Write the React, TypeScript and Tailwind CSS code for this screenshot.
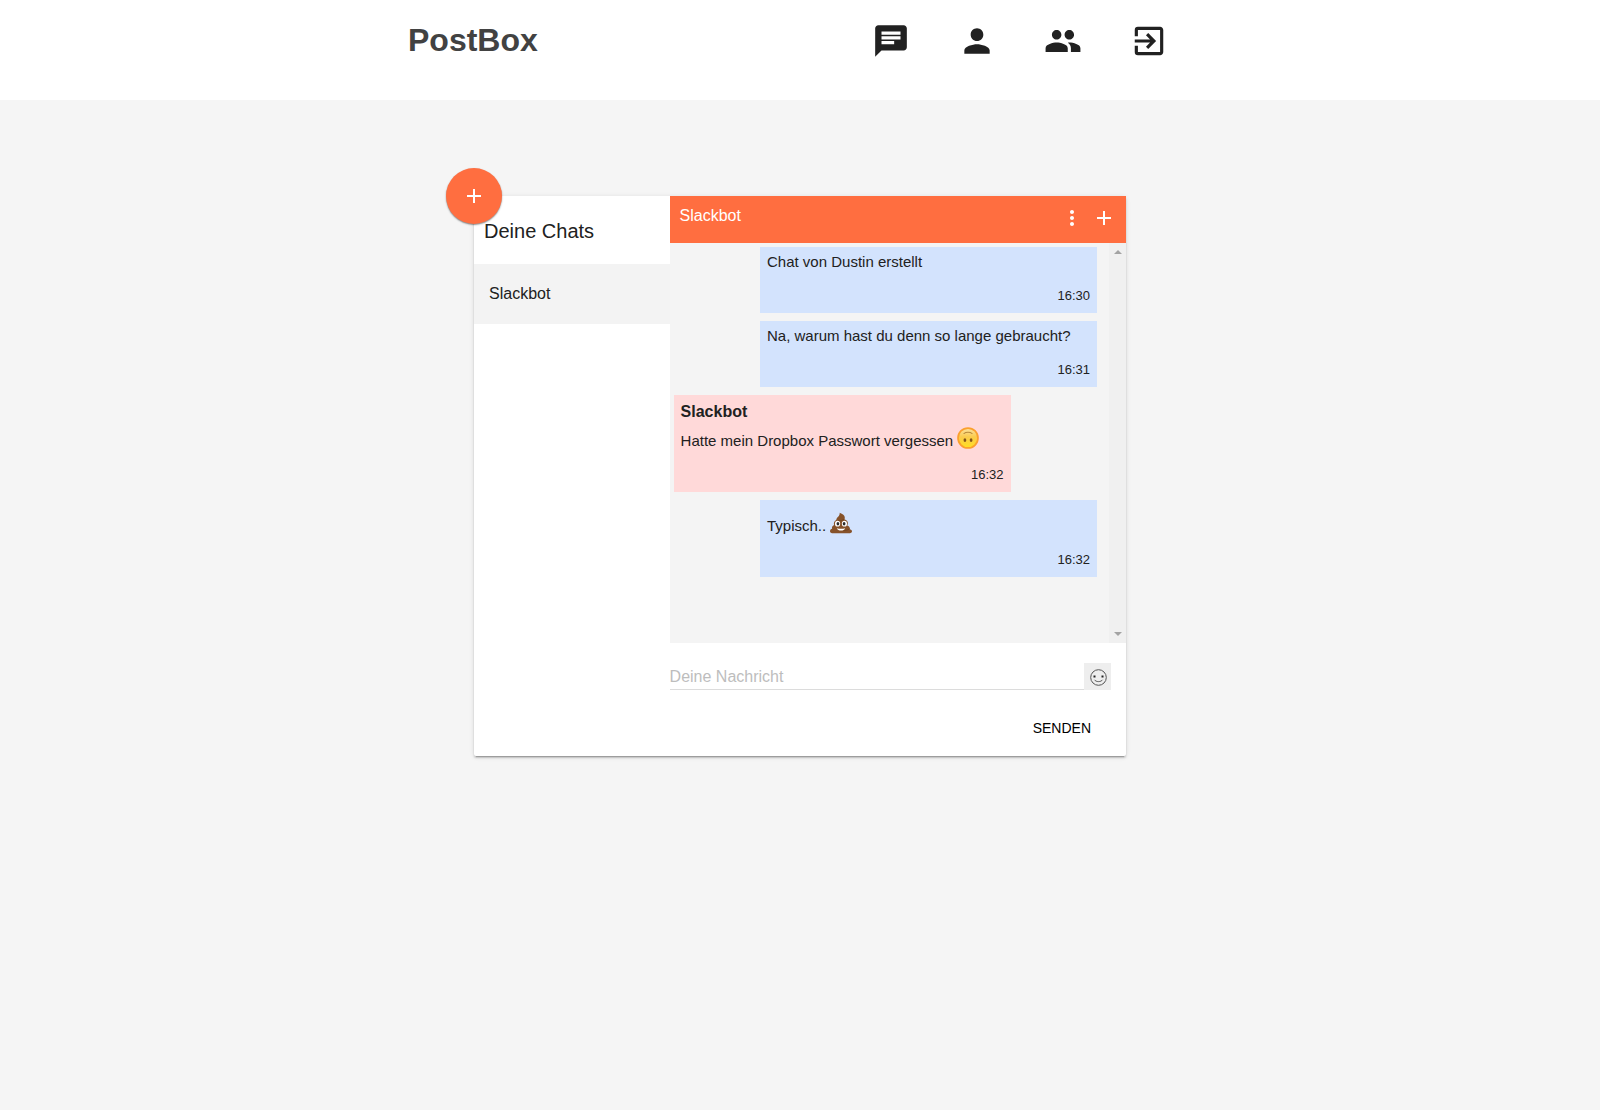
import type { ReactNode } from "react";
import { MdAdd, MdChat, MdExitToApp, MdMoreVert, MdPeople, MdPerson } from "react-icons/md";

const UpsideDownFace = () => (
  <svg viewBox="0 0 64 64" role="img" aria-label="Umgedrehtes Gesicht" className="mb-0.5 size-[22px] shrink-0">
    <defs>
      <linearGradient id="face" x1="0" y1="0" x2="0" y2="1">
        <stop offset="0" stopColor="#fbe3a4" />
        <stop offset="0.45" stopColor="#fbcb4c" />
        <stop offset="1" stopColor="#ffe01f" />
      </linearGradient>
    </defs>
    <circle cx="32" cy="32" r="29" fill="url(#face)" stroke="#fba02e" strokeWidth="5" />
    <path d="M20 19c6-5 18-5 24 0" fill="none" stroke="#b98a3c" strokeWidth="3" strokeLinecap="round" />
    <ellipse cx="23" cy="38" rx="4" ry="5.500" fill="#85551a" />
    <ellipse cx="41" cy="38" rx="4" ry="5.500" fill="#85551a" />
  </svg>
);

const Poop = () => (
  <svg viewBox="0 0 64 64" role="img" aria-label="Haufen" className="mb-0.5 size-[22px] shrink-0">
    <path
      d="M28 2c9 3 15 8 15 14 0 2 0 4-1 5 6 2 10 6 10 11 0 3-1 5-2 7 5 2 8 5 8 9l-1 2c4 1 7 3 7 6 0 4-4 6-10 6H10C4 62 0 60 0 56c0-4 3-6 6-7-1-5 1-9 6-11-2-6 0-12 6-15 1-6 4-8 7-11 2-3 4-6 3-10z"
      fill="#86522a"
    />
    <path d="M41 21c-5 4-11 5-18 4M57 49c-5 4-11 5-18 5" fill="none" stroke="#6d401d" strokeWidth="2" />
    <ellipse cx="22" cy="34" rx="7.500" ry="8.500" fill="#fff" />
    <ellipse cx="42" cy="34" rx="7.500" ry="8.500" fill="#fff" />
    <ellipse cx="23" cy="34" rx="4" ry="5" fill="#2b2b2b" />
    <ellipse cx="41" cy="34" rx="4" ry="5" fill="#2b2b2b" />
    <path d="M20 47c7 2 17 2 24 0-2 9-22 9-24 0z" fill="#fff" />
  </svg>
);

const Smiley = () => (
  <svg viewBox="0 0 17 17" className="size-[17px]" fill="none" stroke="#555">
    <circle cx="8.500" cy="8.500" r="7.800" />
    <path d="M4.500 10.800c1.500 2.400 6.500 2.400 8 0" />
    <path d="M3.500 6.500h2v2h-2zM11.500 6.500h2v2h-2z" fill="#222" stroke="none" />
  </svg>
);

const navItems = [
  { label: "Chats", Icon: MdChat },
  { label: "Profil", Icon: MdPerson },
  { label: "Kontakte", Icon: MdPeople },
  { label: "Abmelden", Icon: MdExitToApp },
];

type Message = { id: number; text: string; time: string; from?: string; emoji?: ReactNode };

const messages: Message[] = [
  { id: 1, text: "Chat von Dustin erstellt", time: "16:30" },
  { id: 2, text: "Na, warum hast du denn so lange gebraucht?", time: "16:31" },
  { id: 3, from: "Slackbot", text: "Hatte mein Dropbox Passwort vergessen", emoji: <UpsideDownFace />, time: "16:32" },
  { id: 4, text: "Typisch..", emoji: <Poop />, time: "16:32" },
];

const Bubble = ({ message }: { message: Message }) => (
  <li
    className={`w-[337px] max-w-full px-[7px] pt-[5px] pb-[7px] ${
      message.from ? "self-start bg-[#ffd9d9]" : "self-end bg-[#d3e3fd]"
    }`}
  >
    {message.from && <p className="-mb-1 text-base leading-6 font-bold">{message.from}</p>}
    <p className={`flex items-end gap-1 text-[15px] leading-5 ${message.emoji ? "h-[31px]" : ""}`}>
      <span>{message.text}</span>
      {message.emoji}
    </p>
    <time className="mt-[14px] block text-right text-[13px] leading-5">{message.time}</time>
  </li>
);

const Header = () => (
  <header className="h-[100px] bg-white">
    <div className="mx-auto flex max-w-[784px] items-start justify-between pt-[22px] pr-6">
      <h1 className="text-[32px] leading-9 font-bold text-[#424242]">PostBox</h1>
      <nav className="flex gap-12">
        {navItems.map(({ label, Icon }) => (
          <a key={label} href="#" aria-label={label}>
            <Icon className="size-[38px]" />
          </a>
        ))}
      </nav>
    </div>
  </header>
);

const Sidebar = () => (
  <aside className="w-[30%]">
    <h2 className="flex h-[68px] items-center pt-0.5 pl-[10px] text-xl">Deine Chats</h2>
    <ul>
      <li>
        <button className="flex h-[60px] w-full items-center bg-[#f3f3f3] pl-[15px] text-base">Slackbot</button>
      </li>
    </ul>
  </aside>
);

const Conversation = () => (
  <section className="flex flex-1 flex-col">
    <div className="flex h-[47px] items-start justify-between bg-[#ff6e40] px-[10px] text-white">
      <h3 className="pt-2 text-base leading-6">Slackbot</h3>
      <div className="flex gap-2 pt-[10px]">
        <button aria-label="Mehr">
          <MdMoreVert className="size-6" />
        </button>
        <button aria-label="Person hinzufügen">
          <MdAdd className="size-6" />
        </button>
      </div>
    </div>

    <div className="flex h-[400px] bg-[#f4f4f4]">
      <ul className="flex flex-1 flex-col gap-2 pt-1 pr-3 pl-1">
        {messages.map((m) => (
          <Bubble key={m.id} message={m} />
        ))}
      </ul>
      <div className="flex w-[17px] flex-col items-center justify-between bg-[#f0f0f0] py-[7px]">
        <svg viewBox="0 0 8 4" className="h-1 w-2" fill="#a3a3a3">
          <path d="M0 4L4 0l4 4z" />
        </svg>
        <svg viewBox="0 0 8 4" className="h-1 w-2" fill="#a3a3a3">
          <path d="M0 0l4 4 4-4z" />
        </svg>
      </div>
    </div>

    <form className="flex flex-col pt-5 pr-[15px] pb-[10px]" onSubmit={(e) => e.preventDefault()}>
      <div className="flex">
        <input
          type="text"
          aria-label="Deine Nachricht"
          placeholder="Deine Nachricht"
          className="h-[27px] flex-1 border-b border-[#dcdcdc] pt-0.5 text-base outline-none placeholder:text-[#bdbdbd]"
        />
        <button
          type="button"
          aria-label="Emoji"
          className="flex size-[27px] items-center justify-center bg-[#eee] pt-0.5 pl-0.5"
        >
          <Smiley />
        </button>
      </div>
      <button type="submit" className="mt-5 mr-1 h-9 self-end px-4 text-sm text-black uppercase">
        Senden
      </button>
    </form>
  </section>
);

export default function App() {
  return (
    <div className="min-h-screen bg-[#f5f5f5] font-['Liberation_Sans',Arial,sans-serif] text-[#212121]">
      <Header />
      <main className="px-4 pt-24">
        <div className="relative mx-auto flex max-w-[652px] rounded-[2px] bg-white shadow-[0_2px_2px_0_rgba(0,0,0,0.14),0_3px_1px_-2px_rgba(0,0,0,0.2),0_1px_5px_0_rgba(0,0,0,0.12)]">
          <Sidebar />
          <Conversation />
          <button
            aria-label="Neuer Chat"
            className="absolute -top-7 -left-7 flex size-14 items-center justify-center rounded-full bg-[#ff6e40] text-white shadow-[0_1px_2px_0_rgba(0,0,0,0.3),0_1px_1px_0_rgba(0,0,0,0.2)]"
          >
            <MdAdd className="size-6" />
          </button>
        </div>
      </main>
    </div>
  );
}
